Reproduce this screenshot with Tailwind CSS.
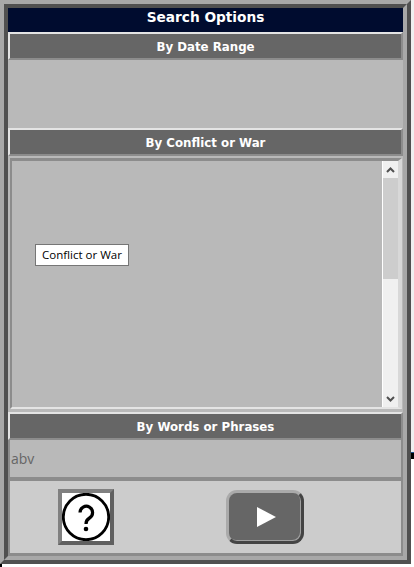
<!DOCTYPE html>
<html>
<head>
<meta charset="utf-8">
<title>Search Options</title>
<script src="https://cdn.jsdelivr.net/npm/@tailwindcss/browser@4"></script>
</head>
<body class="bg-white">
<div class="relative w-[414px] h-[567px] overflow-hidden bg-white font-['DejaVu_Sans',sans-serif]">
    <!-- bits of the window behind -->
    <div class="absolute left-[411px] top-0 w-[3px] h-[452px] bg-[#f0f0f0]"></div>
    <div class="absolute left-[411px] top-[452px] w-[3px] h-[1px] bg-[#1c4f8c]"></div>
    <div class="absolute left-[411px] top-[453px] w-[3px] h-[6px] bg-black"></div>
    <div class="absolute left-0 top-[564px] w-[2px] h-[3px] bg-black"></div>

    <!-- outer window frame -->
    <div class="w-[411px] h-[564px] border-4 border-t-[#a8a8a8] border-l-[#a8a8a8] border-r-[#505050] border-b-[#505050]">
        <div class="h-full border-4 border-t-[#505050] border-l-[#505050] border-r-[#a8a8a8] border-b-[#a8a8a8] flex flex-col bg-[#b9b9b9]">
            <div class="h-6 shrink-0 bg-[#000c2f] text-white font-bold text-[13.7px] leading-[18px] text-center">Search Options</div>

            <div class="h-[28px] shrink-0 bg-[#666666] border-2 border-t-[#e4e4e4] border-l-[#e4e4e4] border-r-[#8c8c8c] border-b-[#8c8c8c] text-white font-bold text-[11.8px] leading-[27px] text-center">By Date Range</div>
            <div class="h-[68px] shrink-0 bg-[#b9b9b9]"></div>

            <div class="h-[28px] shrink-0 bg-[#666666] border-2 border-t-[#e4e4e4] border-l-[#e4e4e4] border-r-[#8c8c8c] border-b-[#8c8c8c] text-white font-bold text-[11.8px] leading-[27px] text-center">By Conflict or War</div>

            <div class="h-[256px] shrink-0 pt-[2px] pb-[3px] pl-[2px] pr-[1px]">
                <div class="h-full flex border-t-[3px] border-l-2 border-r-4 border-b-2 border-t-[#8c8c8c] border-l-[#8c8c8c] border-r-[#d8d8d8] border-b-[#e4e4e4]">
                    <div class="flex-1 pt-[83px] pl-[23px]">
                        <div class="w-[94px] h-[22px] bg-white border border-[#767676] text-black text-[11.5px] leading-[20px] text-center font-['Open_Sans',sans-serif]">Conflict or War</div>
                    </div>
                    <div class="w-[16px] flex flex-col bg-[#f0f0f0] border-l border-white">
                        <div class="h-[17px] flex items-center justify-center">
                            <svg width="9" height="6" viewBox="0 0 9 6"><path d="M1 5 L4.5 1.5 L8 5" fill="none" stroke="#505050" stroke-width="2"/></svg>
                        </div>
                        <div class="h-[101px] bg-[#cdcdcd]"></div>
                        <div class="flex-1"></div>
                        <div class="h-[17px] flex items-center justify-center">
                            <svg width="9" height="6" viewBox="0 0 9 6"><path d="M1 1 L4.5 4.5 L8 1" fill="none" stroke="#505050" stroke-width="2"/></svg>
                        </div>
                    </div>
                </div>
            </div>

            <div class="h-[28px] shrink-0 bg-[#666666] border-2 border-t-[#e4e4e4] border-l-[#e4e4e4] border-r-[#8c8c8c] border-b-[#8c8c8c] text-white font-bold text-[11.8px] leading-[26px] text-center">By Words or Phrases</div>
            <div class="h-[37px] shrink-0 flex items-center pl-[1px] border-x-2 border-x-[#8c8c8c] text-[#666666] text-[14px] font-['Open_Sans',sans-serif]">abv</div>

            <div class="flex-1 flex items-center bg-[#cccccc] border-x-2 border-t-4 border-b-[3px] border-[#8c8c8c]">
                <button aria-label="Help" class="ml-[48px] w-[56px] h-[56px] bg-white border-4 border-t-[#808080] border-l-[#808080] border-r-[#606060] border-b-[#606060] flex items-center justify-center">
                    <svg width="48" height="48" viewBox="0 0 48 48"><circle cx="24" cy="24" r="22.7" fill="white" stroke="black" stroke-width="2.8"/><path d="M18 19.5 A6.3 6.3 0 1 1 27.5 25 Q24 27 24 31" fill="none" stroke="black" stroke-width="3.2"/><circle cx="24" cy="36" r="2.3" fill="black"/></svg>
                </button>
                <button aria-label="Search" class="ml-[112px] w-[78px] h-[54px] pl-[2px] rounded-[11px] bg-[#666666] border-[3px] border-t-[#aaaaaa] border-l-[#aaaaaa] border-r-[#444444] border-b-[#444444] shadow-[inset_-1px_-1px_0_#a0a0a0] flex items-center justify-center">
                    <svg width="20" height="20" viewBox="0 0 20 20"><path d="M1 0 L20 10 L1 20 Z" fill="white"/></svg>
                </button>
            </div>
        </div>
    </div>
</div>
</body>
</html>
